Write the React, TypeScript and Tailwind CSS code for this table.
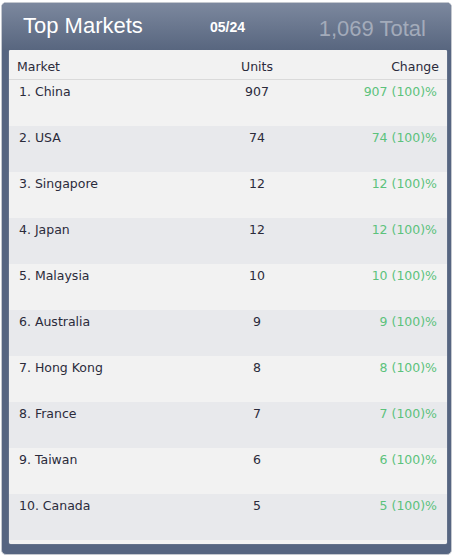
import React from "react";

const rows = [
  ["1. China", "907"],
  ["2. USA", "74"],
  ["3. Singapore", "12"],
  ["4. Japan", "12"],
  ["5. Malaysia", "10"],
  ["6. Australia", "9"],
  ["7. Hong Kong", "8"],
  ["8. France", "7"],
  ["9. Taiwan", "6"],
  ["10. Canada", "5"],
];

export default function App() {
  return (
    <div className="w-[454px] h-[557px] bg-white pt-[2px] pl-[1px]">
      <div className="w-[451px] h-[553px] rounded-[5px] border border-[#c4c8cf] bg-[#566581] flex flex-col overflow-hidden">
        <div className="h-[47px] shrink-0 bg-gradient-to-b from-[#7c889e] to-[#58667f] flex items-center relative" style={{ fontFamily: '"Liberation Sans", Arial, sans-serif' }}>
          <div className="absolute left-[21px] top-[10px] text-[22px] leading-[26px] text-white">Top Markets</div>
          <div className="absolute left-[208px] top-[15px] text-[14px] leading-[18px] font-bold text-white">05/24</div>
          <div className="absolute right-[25px] top-[13px] text-[22px] leading-[26px] text-[#a3abba]">1,069 Total</div>
        </div>
        <div className="ml-[7px] mr-[4px] h-[494px] bg-[#f2f2f2] rounded-[2px] shadow-[0_0_1px_rgba(255,255,255,0.8)] overflow-hidden text-[12.5px] text-[#2b2b3b]" style={{ fontFamily: '"DejaVu Sans", Verdana, sans-serif' }}>
          <div className="h-[30px] grid grid-cols-[208px_80px_1fr] items-end pb-[4px] border-b border-[#dadada] bg-[#f2f2f2]">
            <div className="pl-[8px] leading-[16px]">Market</div>
            <div className="text-center leading-[16px]">Units</div>
            <div className="text-right pr-[8px] leading-[16px]">Change</div>
          </div>
          {rows.map(([name, n], i) => (
            <div key={i} className={`h-[46px] grid grid-cols-[208px_80px_1fr] items-start pt-[4px] ${i % 2 === 1 ? "bg-[#e8e9ec]" : "bg-[#f2f2f2]"}`}>
              <div className="pl-[10px] leading-[16px]">{name}</div>
              <div className="text-center leading-[16px]">{n}</div>
              <div className="text-right pr-[10px] leading-[16px] text-[#5cc27c]">{n} (100)%</div>
            </div>
          ))}
        </div>
      </div>
    </div>
  );
}
